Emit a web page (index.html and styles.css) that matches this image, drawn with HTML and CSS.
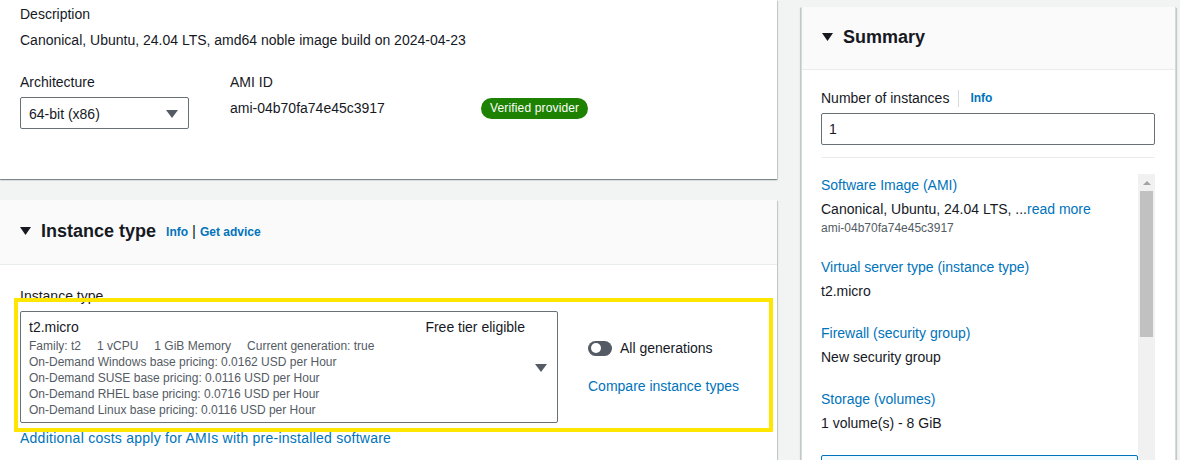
FILE: index.html
```html
<!DOCTYPE html>
<html lang="en">
<head>
<meta charset="utf-8">
<title>Launch an instance</title>
<link rel="stylesheet" href="styles.css">
</head>
<body>
<div class="page">
  <main class="main">
    <section class="card card-ami">
      <div class="label">Description</div>
      <div class="value desc">Canonical, Ubuntu, 24.04 LTS, amd64 noble image build on 2024-04-23</div>
      <div class="ami-row">
        <div class="col col-arch">
          <div class="label">Architecture</div>
          <div class="arch-select">
            <span>64-bit (x86)</span>
            <svg class="caret" width="12" height="8" viewBox="0 0 12 8"><path d="M0 0h12L6 8z" fill="#545b64"/></svg>
          </div>
        </div>
        <div class="col col-ami">
          <div class="label">AMI ID</div>
          <div class="value ami-id">ami-04b70fa74e45c3917</div>
        </div>
        <div class="col col-badge">
          <span class="badge">Verified provider</span>
        </div>
      </div>
    </section>

    <section class="card card-type">
      <header class="card-header">
        <svg class="hcaret" width="11" height="8" viewBox="0 0 11 8"><path d="M0 0h11L5.5 8z" fill="#16191f"/></svg>
        <h2 class="title">Instance type</h2>
        <a class="info">Info</a>
        <span class="pipe">|</span>
        <a class="info">Get advice</a>
      </header>
      <div class="card-body">
        <div class="label">Instance type</div>
        <div class="type-row">
          <div class="type-select">
            <div class="type-main">
              <div class="type-head">
                <span class="type-name">t2.micro</span>
                <span class="free">Free tier eligible</span>
              </div>
              <div class="type-meta">
                <span>Family: t2</span><span>1 vCPU</span><span>1 GiB Memory</span><span>Current generation: true</span>
              </div>
              <div class="type-line">On-Demand Windows base pricing: 0.0162 USD per Hour</div>
              <div class="type-line">On-Demand SUSE base pricing: 0.0116 USD per Hour</div>
              <div class="type-line">On-Demand RHEL base pricing: 0.0716 USD per Hour</div>
              <div class="type-line">On-Demand Linux base pricing: 0.0116 USD per Hour</div>
            </div>
            <div class="type-caret">
              <svg width="12" height="8" viewBox="0 0 12 8"><path d="M0 0h12L6 8z" fill="#545b64"/></svg>
            </div>
          </div>
          <div class="type-side">
            <div class="toggle-row">
              <span class="toggle"><span class="knob"></span></span>
              <span>All generations</span>
            </div>
            <a class="link">Compare instance types</a>
          </div>
          <div class="highlight"></div>
        </div>
        <a class="link costs">Additional costs apply for AMIs with pre-installed software</a>
      </div>
    </section>
  </main>

  <aside class="summary">
    <header class="sum-header">
      <svg class="hcaret" width="11" height="8" viewBox="0 0 11 8"><path d="M0 0h11L5.5 8z" fill="#16191f"/></svg>
      <h2 class="title">Summary</h2>
    </header>
    <div class="sum-body">
      <div class="sum-label">
        <span>Number of instances</span>
        <span class="sep"></span>
        <a class="info info-inline">Info</a>
      </div>
      <div class="input">1</div>
      <div class="divider"></div>
      <div class="scroll">
        <div class="scroll-content">
          <div class="item">
            <a class="link">Software Image (AMI)</a>
            <div class="item-value">Canonical, Ubuntu, 24.04 LTS, ...<a class="link">read more</a></div>
            <div class="item-sub">ami-04b70fa74e45c3917</div>
          </div>
          <div class="item">
            <a class="link">Virtual server type (instance type)</a>
            <div class="item-value">t2.micro</div>
          </div>
          <div class="item">
            <a class="link">Firewall (security group)</a>
            <div class="item-value">New security group</div>
          </div>
          <div class="item">
            <a class="link">Storage (volumes)</a>
            <div class="item-value">1 volume(s) - 8 GiB</div>
          </div>
          <div class="notice"></div>
        </div>
        <div class="scrollbar">
          <div class="sb-btn"><svg width="8" height="4" viewBox="0 0 8 4"><path d="M0 4L4 0L8 4z" fill="#a3a3a3"/></svg></div>
          <div class="sb-thumb"></div>
        </div>
      </div>
    </div>
  </aside>
</div>
</body>
</html>
```

FILE: styles.css
```css
* { box-sizing: border-box; }
html, body { margin: 0; padding: 0; }
body {
  background: #f2f3f3;
  font-family: "Liberation Sans", Arial, sans-serif;
  font-size: 14px;
  line-height: 22px;
  color: #16191f;
}
a { text-decoration: none; }
.page {
  display: flex;
  align-items: flex-start;
  height: 460px;
  overflow: hidden;
}
.main {
  width: 777px;
  flex: none;
  display: flex;
  flex-direction: column;
  gap: 21px;
}
.card {
  background: #fff;
  box-shadow: 0 1px 1px 0 rgba(0, 28, 36, 0.3), 1px 1px 1px 0 rgba(0, 28, 36, 0.15), -1px 1px 1px 0 rgba(0, 28, 36, 0.15);
}
.card-ami {
  padding: 3px 20px 50px;
}
.desc { margin-top: 4px; }
.ami-row {
  display: flex;
  margin-top: 20px;
}
.col-arch { width: 210px; }
.col-ami { width: 251px; }
.arch-select {
  margin-top: 4px;
  width: 169px;
  height: 32px;
  border: 1px solid #687078;
  border-radius: 2px;
  display: flex;
  align-items: center;
  justify-content: space-between;
  padding: 1px 10px 0 8px;
}
.ami-id { margin-top: 4px; }
.col-badge { padding-top: 25px; }
.badge {
  display: inline-block;
  background: #1d8102;
  color: #fff;
  font-size: 12px;
  line-height: 17px;
  padding: 2px 9px;
  border-radius: 11px;
  letter-spacing: 0.15px;
}

.card-type { height: 300px; }
.card-header {
  background: #fafafa;
  border-bottom: 1px solid #eaeded;
  padding: 19px 20px 21px;
  display: flex;
  align-items: center;
  height: 65px;
}
.hcaret { margin-right: 10px; flex: none; }
.title {
  margin: 0;
  font-size: 18px;
  line-height: 24px;
  font-weight: 700;
}
.card-header .title { margin-right: 10px; }
.info {
  color: #0073bb;
  font-size: 12px;
  font-weight: 700;
  line-height: 24px;
  padding-top: 2px;
}
.info-inline {
  line-height: 22px;
  padding-top: 0;
}
.pipe {
  margin: 0 4px 0 4px;
  font-size: 15px;
  color: #16191f;
}
.card-body {
  padding: 20px 20px 40px;
}
.type-row {
  position: relative;
  display: flex;
  margin-top: 4px;
}
.type-select {
  width: 538px;
  height: 112px;
  border: 1px solid #687078;
  border-radius: 2px;
  display: flex;
}
.type-main {
  flex: 1;
  padding: 4px 0 4px 8px;
}
.type-head {
  display: flex;
  justify-content: space-between;
}
.type-meta {
  display: flex;
  gap: 16px;
}
.type-meta, .type-line {
  font-size: 12px;
  line-height: 16px;
  color: #545b64;
}
.type-caret {
  width: 32px;
  flex: none;
  display: flex;
  align-items: center;
  justify-content: center;
  padding-top: 2px;
}
.type-side {
  margin-left: 30px;
  padding-top: 26px;
  display: flex;
  flex-direction: column;
  gap: 16px;
  align-items: flex-start;
}
.toggle-row {
  display: flex;
  align-items: center;
  gap: 8px;
}
.toggle {
  width: 24px;
  height: 15px;
  border-radius: 8px;
  background: #545b64;
  display: flex;
  align-items: center;
  padding-left: 3px;
}
.knob {
  width: 10px;
  height: 10px;
  border-radius: 50%;
  background: #fff;
}
.link { color: #0073bb; }
.costs {
  display: block;
  margin-top: 4px;
  letter-spacing: 0.25px;
}
.highlight {
  position: absolute;
  left: -6px;
  top: -13px;
  right: -16px;
  bottom: -9px;
  border: 4px solid #ffe600;
  pointer-events: none;
}

.summary {
  width: 375px;
  flex: none;
  margin-left: 24px;
  margin-top: 7px;
  background: #fff;
  box-shadow: 0 1px 1px 0 rgba(0, 28, 36, 0.3), 1px 1px 1px 0 rgba(0, 28, 36, 0.15), -1px 1px 1px 0 rgba(0, 28, 36, 0.15);
  border-left: 1px solid #d5dbdb;
  border-right: 1px solid #d5dbdb;
}
.sum-header {
  background: #fafafa;
  border-bottom: 1px solid #eaeded;
  padding: 18px 20px 20px;
  height: 63px;
  display: flex;
  align-items: center;
}
.sum-body {
  padding: 17px 20px 20px 19px;
}
.sum-label {
  display: flex;
  align-items: center;
  height: 22px;
}
.sep {
  width: 1px;
  height: 17px;
  background: #d5dbdb;
  margin: 0 11px 0 9px;
}
.input {
  margin-top: 4px;
  height: 32px;
  border: 1px solid #687078;
  border-radius: 2px;
  padding: 4px 7px;
}
.divider {
  margin-top: 12px;
  height: 1px;
  background: #eaeded;
}
.scroll {
  margin-top: 16px;
  display: flex;
  height: 320px;
}
.scroll-content {
  flex: 1;
  display: flex;
  flex-direction: column;
  gap: 20px;
}
.item {
  display: flex;
  flex-direction: column;
  gap: 2px;
}
.item-sub {
  font-size: 12px;
  line-height: 16px;
  color: #545b64;
  margin-top: -2px;
}
.notice {
  margin-top: 1px;
  height: 60px;
  border: 1px solid #0073bb;
  background: #f1faff;
  border-radius: 2px;
}
.scrollbar {
  width: 17px;
  flex: none;
  background: #f1f1f1;
  display: flex;
  flex-direction: column;
  align-items: center;
}
.sb-btn {
  height: 17px;
  display: flex;
  align-items: center;
  justify-content: center;
}
.sb-thumb {
  width: 13px;
  height: 146px;
  background: #c1c1c1;
}
```
